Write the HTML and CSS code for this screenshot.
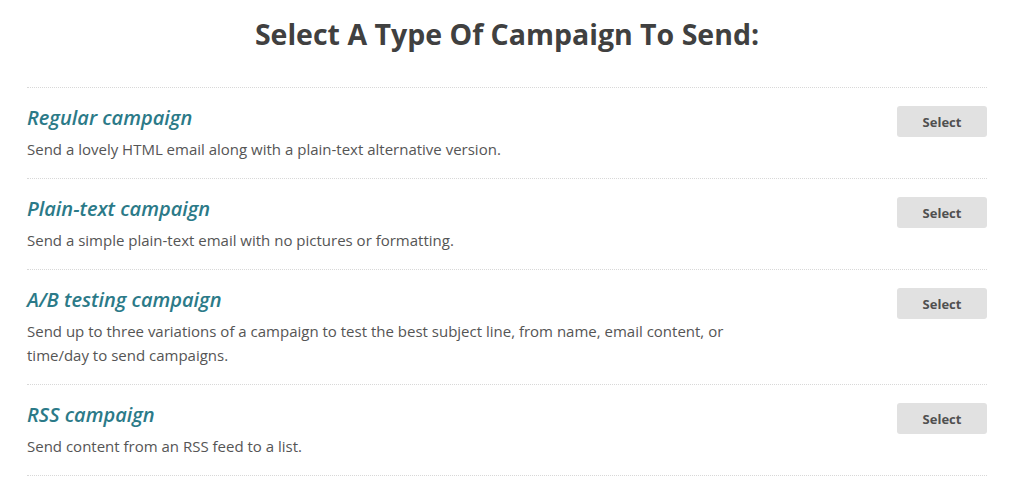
FILE: index.html
```html
<!DOCTYPE html>
<html>
<head>
<meta charset="utf-8">
<link rel="stylesheet" href="styles.css">
</head>
<body>
<div class="page">
  <h1 class="title">Select A Type Of Campaign To Send:</h1>
  <ul class="list">
    <li class="item">
      <div class="info">
        <h2 class="name">Regular campaign</h2>
        <p class="desc">Send a lovely HTML email along with a plain-text alternative version.</p>
      </div>
      <button class="btn">Select</button>
    </li>
    <li class="item">
      <div class="info">
        <h2 class="name">Plain-text campaign</h2>
        <p class="desc">Send a simple plain-text email with no pictures or formatting.</p>
      </div>
      <button class="btn">Select</button>
    </li>
    <li class="item">
      <div class="info">
        <h2 class="name">A/B testing campaign</h2>
        <p class="desc narrow">Send up to three variations of a campaign to test the best subject line, from name, email content, or time/day to send campaigns.</p>
      </div>
      <button class="btn">Select</button>
    </li>
    <li class="item">
      <div class="info">
        <h2 class="name">RSS campaign</h2>
        <p class="desc">Send content from an RSS feed to a list.</p>
      </div>
      <button class="btn">Select</button>
    </li>
  </ul>
</div>
</body>
</html>
```
FILE: styles.css
```css
html, body {
  margin: 0;
  padding: 0;
  background: #fff;
}
body {
  font-family: "Open Sans", "Liberation Sans", sans-serif;
  color: #555;
}
.page {
  width: 960px;
  margin-left: 27px;
  padding-top: 14px;
}
.title {
  margin: 0 0 33px;
  text-align: center;
  font-size: 28.5px;
  line-height: 40px;
  font-weight: 700;
  color: #404040;
}
.list {
  list-style: none;
  margin: 0;
  padding: 0;
  border-bottom: 1px dotted #d8d8d8;
}
.item {
  display: flex;
  justify-content: space-between;
  align-items: flex-start;
  border-top: 1px dotted #d8d8d8;
  padding: 16px 0 17px;
}
.name {
  margin: 0;
  font-size: 20px;
  line-height: 28px;
  font-style: italic;
  font-weight: 600;
  color: #2b7a88;
}
.desc {
  margin: 5px 0 0;
  font-size: 15px;
  line-height: 24px;
  color: #555;
}
.narrow {
  max-width: 720px;
}
.btn {
  width: 90px;
  height: 31px;
  margin-top: 2px;
  border: none;
  border-radius: 3px;
  background: #e1e1e1;
  color: #505050;
  font-family: "Open Sans", "Liberation Sans", sans-serif;
  font-size: 13px;
  font-weight: 700;
  padding: 0;
}
```
